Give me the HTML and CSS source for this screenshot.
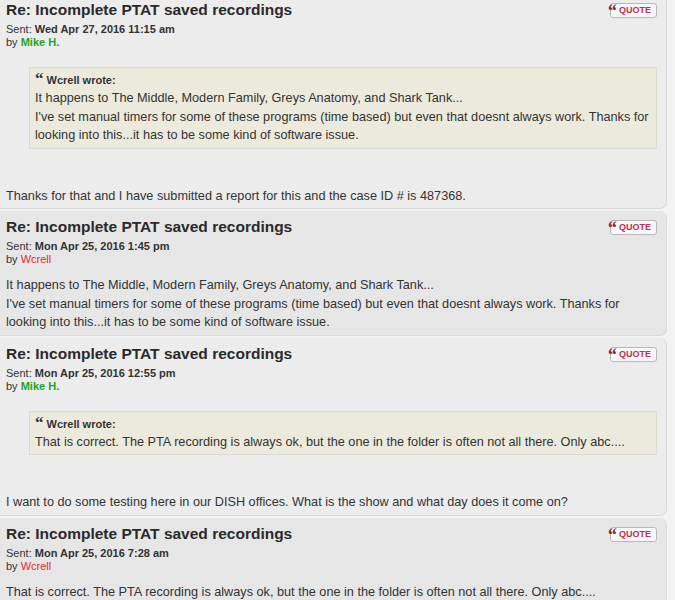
FILE: index.html
```html
<!DOCTYPE html>
<html lang="en">
<head>
<meta charset="UTF-8">
<title>Re: Incomplete PTAT saved recordings</title>
<link rel="stylesheet" href="styles.css">
</head>
<body>

<div class="topic">

  <div class="post bg1">
    <div class="post-head">
      <h3>Re: Incomplete PTAT saved recordings</h3>
      <a class="quote-btn" href="#"><span class="qmark">&ldquo;</span>QUOTE</a>
    </div>
    <p class="meta">Sent: <b>Wed Apr 27, 2016 11:15 am</b><br>by <span class="user green">Mike H.</span></p>
    <div class="content">
      <blockquote>
        <cite><span class="cq">&ldquo;</span> Wcrell wrote:</cite>
        It happens to The Middle, Modern Family, Greys Anatomy, and Shark Tank...<br>
        I've set manual timers for some of these programs (time based) but even that doesnt always work. Thanks for looking into this...it has to be some kind of software issue.
      </blockquote>
      <br><br>
      Thanks for that and I have submitted a report for this and the case ID # is 487368.
    </div>
  </div>

  <div class="post bg2">
    <div class="post-head">
      <h3>Re: Incomplete PTAT saved recordings</h3>
      <a class="quote-btn" href="#"><span class="qmark">&ldquo;</span>QUOTE</a>
    </div>
    <p class="meta">Sent: <b>Mon Apr 25, 2016 1:45 pm</b><br>by <span class="user red">Wcrell</span></p>
    <div class="content">
      It happens to The Middle, Modern Family, Greys Anatomy, and Shark Tank...<br>
      I've set manual timers for some of these programs (time based) but even that doesnt always work. Thanks for looking into this...it has to be some kind of software issue.
    </div>
  </div>

  <div class="post bg1">
    <div class="post-head">
      <h3>Re: Incomplete PTAT saved recordings</h3>
      <a class="quote-btn" href="#"><span class="qmark">&ldquo;</span>QUOTE</a>
    </div>
    <p class="meta">Sent: <b>Mon Apr 25, 2016 12:55 pm</b><br>by <span class="user green">Mike H.</span></p>
    <div class="content">
      <blockquote>
        <cite><span class="cq">&ldquo;</span> Wcrell wrote:</cite>
        That is correct. The PTA recording is always ok, but the one in the folder is often not all there. Only abc....
      </blockquote>
      <br><br>
      I want to do some testing here in our DISH offices. What is the show and what day does it come on?
    </div>
  </div>

  <div class="post bg2">
    <div class="post-head">
      <h3>Re: Incomplete PTAT saved recordings</h3>
      <a class="quote-btn" href="#"><span class="qmark">&ldquo;</span>QUOTE</a>
    </div>
    <p class="meta">Sent: <b>Mon Apr 25, 2016 7:28 am</b><br>by <span class="user red">Wcrell</span></p>
    <div class="content">
      That is correct. The PTA recording is always ok, but the one in the folder is often not all there. Only abc....
    </div>
  </div>

</div>

</body>
</html>
```

FILE: styles.css
```css
body {
  margin: 0;
  background: #f3f3f3;
  font-family: "Liberation Sans", Arial, sans-serif;
  color: #333;
  overflow: hidden;
}

.topic {
  margin-top: -6px;
}

.post {
  margin: 0 8px 3px -8px;
  padding: 6px 9px 3px 14px;
  border-radius: 7px;
  border-right: 1px solid #dcdcdc;
  box-shadow: 0 1px 0 #d8d8d8;
}

.bg1 {
  background: #ececec;
}

.bg2 {
  background: #e6e6e6;
}

.post-head {
  display: flex;
  justify-content: space-between;
  align-items: flex-start;
}

h3 {
  margin: 0;
  font-size: 15.5px;
  line-height: 20px;
  color: #2a2a2a;
}

.quote-btn {
  position: relative;
  margin-top: 3px;
  padding: 0 5px 0 8px;
  height: 13px;
  line-height: 13px;
  font-size: 9px;
  font-weight: bold;
  color: #c12d56;
  text-decoration: none;
  background: #f8f8f8;
  border: 1px solid #b8b8b8;
  border-radius: 3px;
}

.qmark {
  position: absolute;
  left: -4px;
  top: -3px;
  line-height: 19px;
  font-family: "Liberation Serif", serif;
  font-size: 19px;
  font-weight: bold;
  font-style: italic;
  color: #8e2a38;
}

.meta {
  margin: 3px 0 0;
  font-size: 11px;
  line-height: 13px;
}

.user.green {
  color: #1ea41e;
  font-weight: bold;
}

.user.red {
  color: #e12a2a;
}

.content {
  padding-top: 10px;
  font-size: 12.7px;
  line-height: 18.5px;
}

blockquote {
  margin: 8px 0 1px 23px;
  padding: 4px 4px 3px 5px;
  background: #ebeadd;
  border: 1px solid #dbdbce;
}

cite {
  display: block;
  margin-bottom: 1px;
  font-style: normal;
  font-weight: bold;
  font-size: 11px;
  line-height: 16px;
}

.cq {
  font-family: "Liberation Serif", serif;
  font-size: 17px;
  font-weight: bold;
  line-height: 10px;
  color: #333;
}
```
